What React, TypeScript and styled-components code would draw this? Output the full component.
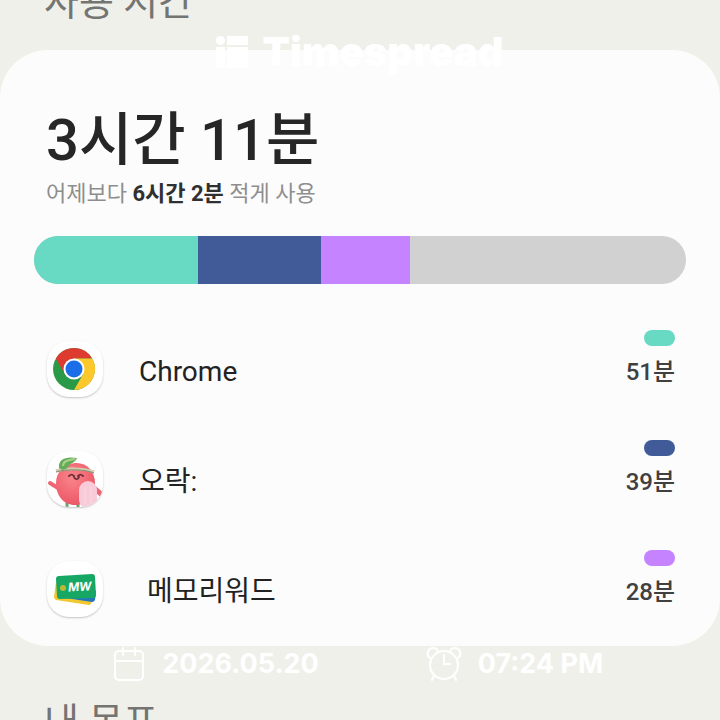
import React from 'react';
import styled, { createGlobalStyle } from 'styled-components';

const GlobalStyle = createGlobalStyle`
  * {
    box-sizing: border-box;
  }

  body {
    margin: 0;
    background: #f0f0eb;
    color: #262626;
    font-family: Roboto, 'Noto Sans CJK KR', sans-serif;
  }

  h1, h2, p, ul {
    margin: 0;
    padding: 0;
  }
`;

const Page = styled.main`
  position: relative;
  height: 100vh;
  overflow: hidden;
`;

const SectionTitle = styled.h2`
  padding: 0 44px;
  color: #747472;
  font-size: 38px;
  font-weight: 400;
  line-height: 48px;
`;

/* The page is scrolled, so the first title is half out of view */
const Scrolled = styled.div`
  margin-top: -22px;
`;

const Card = styled.section`
  margin: 24px 0 52px;
  padding: 58px 34px 4px;
  border-radius: 48px;
  background: #fcfcfc;
`;

const Total = styled.h1`
  padding: 0 12px;
  font-size: 58px;
  font-weight: 500;
  line-height: 64px;
`;

const Compare = styled.p`
  padding: 0 12px;
  margin-top: 8px;
  color: #8e8e8e;
  font-size: 22px;
  line-height: 28px;

  strong {
    color: #303030;
    font-weight: 700;
  }
`;

const Bar = styled.div`
  display: flex;
  height: 48px;
  margin: 28px 0;
  border-radius: 24px;
  overflow: hidden;
  background: #d1d1d1;
`;

const Segment = styled.div<{ $color: string; $share: number }>`
  flex: 0 0 ${props => props.$share}%;
  background: ${props => props.$color};
`;

const AppList = styled.ul`
  list-style: none;
`;

const AppRow = styled.li`
  display: flex;
  align-items: center;
  height: 110px;
  padding: 0 11px 0 13px;
`;

const AppIcon = styled.div`
  width: 56px;
  height: 56px;
  margin-top: 4px;
  border-radius: 22px;
  background: white;
  box-shadow: 0 1px 2px rgba(0, 0, 0, 0.22);
  overflow: hidden;

  svg {
    display: block;
  }
`;

const AppName = styled.span<{ $indent?: boolean }>`
  flex: 1;
  margin-top: 10px;
  padding-left: ${props => (props.$indent ? '44px' : '36px')};
  color: #222;
  font-size: 28px;
  line-height: 36px;
`;

const Usage = styled.div`
  display: flex;
  flex-direction: column;
  align-items: flex-end;
  gap: 12px;
  margin-bottom: 18px;
  color: #404040;
  font-size: 24px;
  font-weight: 500;
  line-height: 28px;
`;

const Pill = styled.i<{ $color: string }>`
  width: 31px;
  height: 16px;
  border-radius: 8px;
  background: ${props => props.$color};
`;

const Brand = styled.div`
  position: absolute;
  top: 28px;
  left: 0;
  right: 0;
  display: flex;
  justify-content: center;
  align-items: center;
  gap: 14px;
  color: white;
  font-family: Inter, sans-serif;
  font-size: 40px;
  font-weight: 900;
  line-height: 48px;
`;

const Stamp = styled.div`
  position: absolute;
  top: 644px;
  left: 0;
  right: 0;
  display: grid;
  grid-template-columns: 1fr 1fr;
  padding: 0 56px 0 66px;
  color: white;
  font-family: Inter, sans-serif;
  font-size: 27px;
  font-weight: 700;
  line-height: 40px;
`;

const StampItem = styled.div`
  display: flex;
  justify-content: center;
  align-items: center;
  gap: 16px;
`;

const ChromeIcon = () => (
  <svg width="56" height="56" viewBox="0 0 56 56">
    <circle cx="27" cy="28" r="21" fill="#2b9a48" />
    <path d="M8.8 17.5A21 21 0 0 1 45.2 17.5H27L18 33.3Z" fill="#dd3a30" />
    <path d="M45.2 17.5A21 21 0 0 1 27 49L36.1 33.2 27 17.5Z" fill="#fcc82c" />
    <circle cx="27" cy="28" r="10.5" fill="white" />
    <circle cx="27" cy="28" r="8.5" fill="#1b6ee8" />
  </svg>
);

const PeachIcon = () => (
  <svg width="56" height="56" viewBox="0 0 56 56">
    <defs>
      <radialGradient id="peach" cx="42%" cy="35%" r="65%">
        <stop offset="0" stopColor="#fa8589" />
        <stop offset="1" stopColor="#ec5869" />
      </radialGradient>
    </defs>
    <path d="M11 37 3 32" stroke="#ed6676" strokeWidth="4" strokeLinecap="round" />
    <path d="m47 37 7 6" stroke="#ed6676" strokeWidth="5" strokeLinecap="round" />
    <path d="M20 50v6M31 50v6" stroke="#69a36c" strokeWidth="3" />
    <path d="M28 12C39 11 48 20 48 32c0 13-8 22-20 22S9 44 9 32c0-11 8-19 19-20Z" fill="url(#peach)" />
    <path d="M9 20c10-3 28-3 38 1" fill="none" stroke="#d4c8ad" strokeWidth="3" />
    <path d="M9 21c10-3 28-3 38 1" fill="none" stroke="#779273" strokeWidth="1" />
    <path d="M12 17C11 8 19 5 30 7c-2 5-7 5-9 9-2 3-6 4-9 1Z" fill="#67ad59" />
    <path d="M16 15c0-5 5-6 12-7" fill="none" stroke="#a7d28d" strokeWidth="2" />
    <path d="M22 25c2-2 3-2 5 0m4 0c2-2 3-2 5 0m-9 1c1 3 4 3 5 0" fill="none" stroke="#71323e" strokeWidth="2" strokeLinecap="round" />
    <rect x="32" y="30" width="18" height="28" rx="9" fill="#f9cbd8" />
    <path d="M38 36v17M44 36v17" stroke="#fad2dd" strokeWidth="2" />
  </svg>
);

const CardsIcon = () => (
  <svg width="56" height="56" viewBox="0 0 56 56">
    <path d="M9 21 7 36q0 2 2 3l33 5q2 0 3-4l2-12Z" fill="#f2c730" />
    <path d="m12 30 34-2 3 2-1 9q-1 2-3 2L12 36Z" fill="#2376b9" />
    <path d="M12 15 45 13q3 0 3 3l1 18q0 3-3 3l-33 1q-3 0-3-3L9 18q0-3 3-3Z" fill="#17a765" />
    <circle cx="16" cy="27" r="3" fill="#b8ba30" />
    <text x="21" y="30" fill="white" fontFamily="Inter, sans-serif" fontSize="12" fontStyle="italic" fontWeight="700" transform="rotate(-3 33 27)">MW</text>
  </svg>
);

const BrandLogo = () => (
  <svg width="32" height="32" viewBox="0 0 32 32" fill="white">
    <circle cx="4.5" cy="4.5" r="4.5" />
    <path d="M11 0h21v9H11zM0 11h9v21H0zM11 11h21v21H11z" />
  </svg>
);

const CalendarIcon = () => (
  <svg width="34" height="36" viewBox="0 0 34 36" fill="none" stroke="white" strokeWidth="2" strokeLinecap="round">
    <rect x="3" y="5" width="28" height="29" rx="4" />
    <path d="M3 15h28M11 2v7M23 2v7" />
  </svg>
);

const AlarmIcon = () => (
  <svg width="36" height="36" viewBox="0 0 36 36" fill="none" stroke="white" strokeWidth="2" strokeLinecap="round">
    <circle cx="18" cy="19" r="14" />
    <path d="M4 12A5.5 5.5 0 1 1 12 5M24 5A5.5 5.5 0 1 1 32 12M8 30l-2 4M28 30l2 4M18 9v9h6" />
  </svg>
);

const apps = [
  { name: 'Chrome', time: '51분', color: '#68d9c2', share: 25.2, icon: <ChromeIcon /> },
  { name: '오락:', time: '39분', color: '#405b98', share: 18.8, icon: <PeachIcon /> },
  { name: '메모리워드', time: '28분', color: '#c583ff', share: 13.7, icon: <CardsIcon />, indent: true },
];

const App = () => {
  return (
    <>
      <GlobalStyle />
      <Page>
        <Scrolled>
          <SectionTitle>사용 시간</SectionTitle>
          <Card>
            <Total>3시간 11분</Total>
            <Compare>
              어제보다 <strong>6시간 2분</strong> 적게 사용
            </Compare>
            <Bar>
              {apps.map(app => (
                <Segment key={app.name} $color={app.color} $share={app.share} />
              ))}
            </Bar>
            <AppList>
              {apps.map(app => (
                <AppRow key={app.name}>
                  <AppIcon>{app.icon}</AppIcon>
                  <AppName $indent={app.indent}>{app.name}</AppName>
                  <Usage>
                    <Pill $color={app.color} />
                    {app.time}
                  </Usage>
                </AppRow>
              ))}
            </AppList>
          </Card>
          <SectionTitle>내 목표</SectionTitle>
        </Scrolled>

        <Brand>
          <BrandLogo />
          Timespread
        </Brand>
        <Stamp>
          <StampItem>
            <CalendarIcon />
            2026.05.20
          </StampItem>
          <StampItem>
            <AlarmIcon />
            07:24 PM
          </StampItem>
        </Stamp>
      </Page>
    </>
  );
};

export default App;
